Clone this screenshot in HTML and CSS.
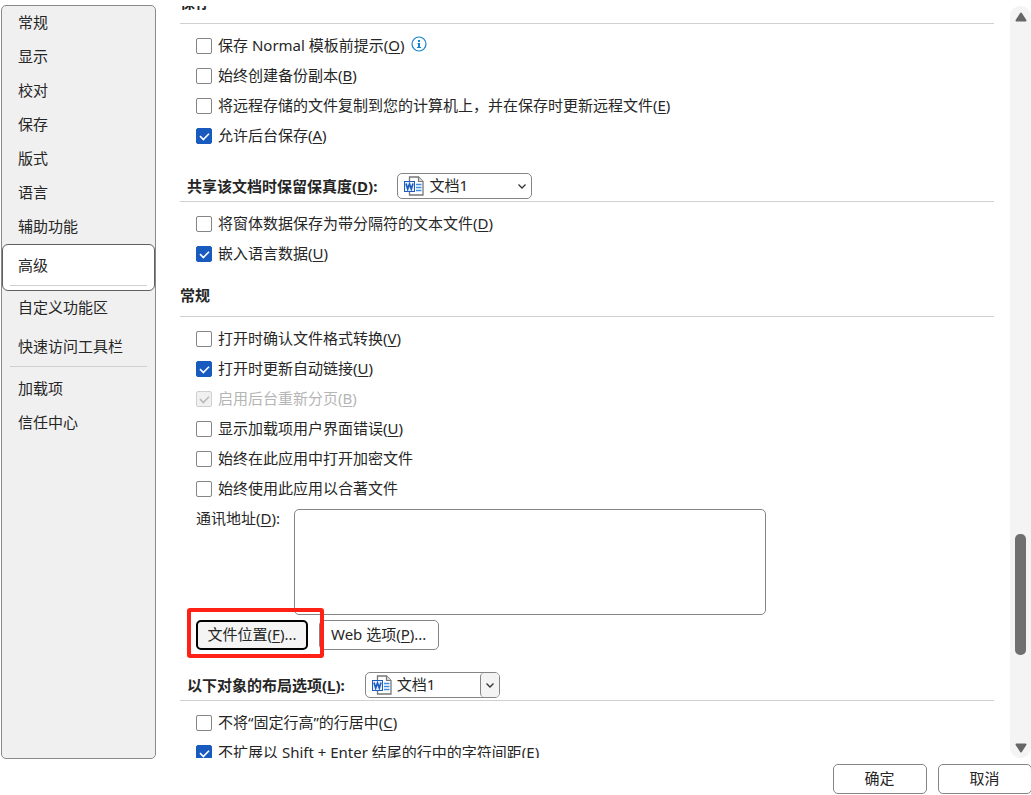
FILE: index.html
```html
<!DOCTYPE html>
<html lang="zh-CN">
<head>
<meta charset="utf-8">
<title>选项</title>
<link rel="stylesheet" href="styles.css">
</head>
<body>
<svg class="defs" aria-hidden="true">
  <symbol id="doc" viewBox="0 0 20 20">
    <path d="M5.500 1H14.500L19 5.500V19H5.500Z" fill="#fff" stroke="#777" stroke-width="1.300"/>
    <path d="M14.500 1V5.500H19" fill="#ddd" stroke="#777" stroke-width="1.200"/>
    <path d="M12 8.500H17.500M12 11.500H17.500M12 14.500H17.500" stroke="#3f8de0" stroke-width="1.300"/>
    <rect x="0.500" y="5.500" width="10" height="10" fill="#e8f0fb" stroke="#1f5cc0"/>
    <path d="M2 7.500L3.700 13L5.500 8L7.300 13L9 7.500" fill="none" stroke="#1f5cc0" stroke-width="1.700"/>
  </symbol>
</svg>
<div class="dialog">
  <div class="body">
    <nav class="sidebar">
      <button class="item">常规</button>
      <button class="item">显示</button>
      <button class="item">校对</button>
      <button class="item">保存</button>
      <button class="item">版式</button>
      <button class="item">语言</button>
      <button class="item">辅助功能</button>
      <button class="item selected">高级</button>
      <button class="item">自定义功能区</button>
      <button class="item spaced">快速访问工具栏</button>
      <hr class="divider">
      <button class="item">加载项</button>
      <button class="item">信任中心</button>
    </nav>
    <main class="pane">
      <h2 class="heading first">保存</h2>
      <div class="options">
        <div class="row"><label class="check"><input type="checkbox"><span>保存 Normal 模板前提示(<u>O</u>)</span></label>
          <svg class="info" viewBox="0 0 16 16" role="img" aria-label="信息"><circle cx="8" cy="8" r="7" fill="none" stroke="#1683c9" stroke-width="1.200"/><path d="M8 4V6M8 7V12" stroke="#1683c9" stroke-width="2"/><path d="M6.500 7.500H8M6 11.500H10" stroke="#1683c9"/></svg></div>
        <div class="row"><label class="check"><input type="checkbox"><span>始终创建备份副本(<u>B</u>)</span></label></div>
        <div class="row"><label class="check"><input type="checkbox"><span>将远程存储的文件复制到您的计算机上，并在保存时更新远程文件(<u>E</u>)</span></label></div>
        <div class="row"><label class="check"><input type="checkbox" checked><span>允许后台保存(<u>A</u>)</span></label></div>
      </div>

      <div class="heading-select">
        <label for="share">共享该文档时保留保真度(<u>D</u>):</label>
        <div class="combo">
          <svg class="doc"><use href="#doc"/></svg>
          <select id="share"><option>文档1</option></select>
          <span class="arrow"><svg viewBox="0 0 8 5"><path d="M.5.500L4 4L7.500.5"/></svg></span>
        </div>
      </div>
      <div class="options">
        <div class="row"><label class="check"><input type="checkbox"><span>将窗体数据保存为带分隔符的文本文件(<u>D</u>)</span></label></div>
        <div class="row"><label class="check"><input type="checkbox" checked><span>嵌入语言数据(<u>U</u>)</span></label></div>
      </div>

      <h2 class="heading">常规</h2>
      <div class="options">
        <div class="row"><label class="check"><input type="checkbox"><span>打开时确认文件格式转换(<u>V</u>)</span></label></div>
        <div class="row"><label class="check"><input type="checkbox" checked><span>打开时更新自动链接(<u>U</u>)</span></label></div>
        <div class="row"><label class="check"><input type="checkbox" checked disabled><span>启用后台重新分页(<u>B</u>)</span></label></div>
        <div class="row"><label class="check"><input type="checkbox"><span>显示加载项用户界面错误(<u>U</u>)</span></label></div>
        <div class="row"><label class="check"><input type="checkbox"><span>始终在此应用中打开加密文件</span></label></div>
        <div class="row"><label class="check"><input type="checkbox"><span>始终使用此应用以合著文件</span></label></div>
        <div class="address">
          <label for="address">通讯地址(<u>D</u>):</label>
          <textarea id="address"></textarea>
        </div>
        <div class="actions">
          <div class="marked"><button class="button focused">文件位置(<u>F</u>)...</button></div>
          <button class="button">Web 选项(<u>P</u>)...</button>
        </div>
      </div>

      <div class="heading-select">
        <label for="layout">以下对象的布局选项(<u>L</u>):</label>
        <div class="combo split">
          <svg class="doc"><use href="#doc"/></svg>
          <select id="layout"><option>文档1</option></select>
          <span class="arrow"><svg viewBox="0 0 8 5"><path d="M.5.500L4 4L7.500.5"/></svg></span>
        </div>
      </div>
      <div class="options">
        <div class="row"><label class="check"><input type="checkbox"><span>不将<q>固定行高</q>的行居中(<u>C</u>)</span></label></div>
        <div class="row"><label class="check"><input type="checkbox" checked><span>不扩展以 Shift + Enter 结尾的行中的字符间距(<u>E</u>)</span></label></div>
      </div>
    </main>
    <div class="scrollbar">
      <svg class="tri" viewBox="0 0 12 10"><path d="M6 1.500L10.500 8.500H1.500Z"/></svg>
      <div class="before"></div>
      <div class="thumb"></div>
      <div class="after"></div>
      <svg class="tri" viewBox="0 0 12 10"><path d="M6 8.500L10.500 1.500H1.500Z"/></svg>
    </div>
  </div>
  <footer class="footer">
    <button class="button wide">确定</button>
    <button class="button wide">取消</button>
  </footer>
</div>
</body>
</html>
```
FILE: styles.css
```css
* { box-sizing: border-box; }

body {
  margin: 0;
  overflow: hidden;
  background: #fff;
  color: #262626;
  font: 15px/22px "Noto Sans", "Noto Sans CJK SC", sans-serif;
}

button, select, textarea {
  margin: 0;
  color: inherit;
  font: inherit;
}

u { text-underline-offset: 2px; }

q { quotes: none; }
q::before { content: "\201C"; }
q::after { content: "\201D"; }

.defs { display: none; }

.dialog {
  display: flex;
  flex-direction: column;
  height: 100vh;
  padding: 5px 0 1px 1px;
}

.body {
  display: flex;
  flex: 1;
  min-height: 0;
}

.sidebar {
  display: flex;
  flex-direction: column;
  flex: none;
  width: 155px;
  border: 1px solid #8a8a8a;
  border-radius: 5px;
  background: #f0f0f0;
}

.item {
  height: 34px;
  padding: 0 15px 2px;
  border: 1px solid transparent;
  background: none;
  text-align: left;
}

.item.spaced { margin-top: 5px; }

.item.selected {
  display: flex;
  flex-direction: column;
  justify-content: space-between;
  height: 47px;
  padding: 9px 7px 4px;
  border-color: #606060;
  border-radius: 6px;
  background: #fff;
  text-indent: 8px;
}

.item.selected::after {
  content: "";
  align-self: stretch;
  border-bottom: 1px solid #d0d0d0;
}

.divider {
  width: auto;
  margin: 2px 8px 5px;
  border: 0;
  border-top: 1px solid #d0d0d0;
}

.pane {
  flex: 1;
  min-width: 0;
  margin: 1px 16px 1px 24px;
  overflow: hidden;
}

.heading {
  margin: 15px 0 0;
  padding-bottom: 10px;
  border-bottom: 1px solid #d0d0d0;
  font-size: 15px;
  font-weight: 700;
}

.heading.first { margin-top: -15px; }

.heading-select {
  display: flex;
  align-items: center;
  gap: 20px;
  margin-top: 22px;
  padding: 0 0 2px 7px;
  border-bottom: 1px solid #d0d0d0;
  font-weight: 700;
}

.options { padding: 7px 0 0 16px; }

.row {
  display: flex;
  align-items: center;
  gap: 6px;
  height: 30px;
  white-space: nowrap;
}

.check {
  display: flex;
  align-items: center;
  gap: 6px;
}

.check span { padding-bottom: 2px; }

.check input {
  appearance: none;
  flex: none;
  width: 16px;
  height: 16px;
  margin: 0;
  border: 1px solid #858585;
  border-radius: 2px;
  background: #fff;
}

.check input:checked {
  border-color: #185abd;
  background: #185abd;
}

.check input:checked::before {
  content: "";
  display: block;
  width: 9px;
  height: 5px;
  margin: 3px 0 0 2px;
  border: solid #fff;
  border-width: 0 0 2px 2px;
  transform: rotate(-45deg) scale(.8);
}

.check input:disabled {
  border-color: #d0d0d0;
  background: #f0f0f0;
}

.check input:disabled::before { border-color: #b8b8b8; }
.check input:disabled + span { color: #b5b5b5; }

.info {
  width: 16px;
  height: 16px;
  margin-bottom: 4px;
}

.combo {
  position: relative;
  width: 135px;
  font-weight: 400;
}

.combo select {
  appearance: none;
  display: block;
  width: 100%;
  height: 26px;
  padding: 0 24px 2px 31px;
  border: 1px solid #858585;
  border-radius: 5px;
  background: #fff;
}

.doc {
  position: absolute;
  top: 3px;
  left: 7px;
  width: 20px;
  height: 20px;
}

.arrow {
  position: absolute;
  top: 1px;
  right: 1px;
  display: flex;
  align-items: center;
  justify-content: center;
  width: 19px;
  height: 24px;
  border-radius: 4px;
  pointer-events: none;
}

.arrow svg {
  width: 8px;
  height: 5px;
  overflow: visible;
  fill: none;
  stroke: #333;
  stroke-width: 1.3;
}

.split .arrow {
  border-left: 1px solid #858585;
  background: #f3f3f3;
}

.address {
  display: flex;
  align-items: flex-start;
  gap: 14px;
  padding-top: 5px;
}

.address label { margin-top: -2px; }

.address textarea {
  width: 472px;
  height: 106px;
  padding: 4px;
  border: 1px solid #858585;
  border-radius: 5px;
  background: #fff;
  resize: none;
}

.actions {
  display: flex;
  gap: 11px;
  margin-top: 5px;
}

.button {
  height: 30px;
  padding: 0 12px 2px 11px;
  border: 1px solid #858585;
  border-radius: 5px;
  background: #fff;
}

.button.focused {
  width: 112px;
  padding: 0 0 2px;
  border: 2px solid #000;
  background: #f4f4f4;
}

.button.wide { width: 94px; }

.marked { position: relative; }

.marked::after {
  content: "";
  position: absolute;
  inset: -12px -16px -8px -9px;
  z-index: 1;
  border: 4px solid #ff2116;
  border-radius: 3px;
  pointer-events: none;
}

.scrollbar {
  display: flex;
  flex-direction: column;
  align-items: center;
  width: 21px;
  margin: 1px 0;
  padding: 6px 0 5px;
  border-radius: 10px;
  background: #f4f4f4;
}

.tri {
  flex: none;
  width: 12px;
  height: 10px;
  fill: #666;
  stroke: #666;
  stroke-width: 2;
  stroke-linejoin: round;
}

.before { flex: 512; }
.after { flex: 88; }

.thumb {
  width: 11px;
  height: 121px;
  border-radius: 5px;
  background: #707070;
}

.footer {
  display: flex;
  justify-content: flex-end;
  gap: 11px;
  margin-right: -1px;
  padding-top: 5px;
}
```
